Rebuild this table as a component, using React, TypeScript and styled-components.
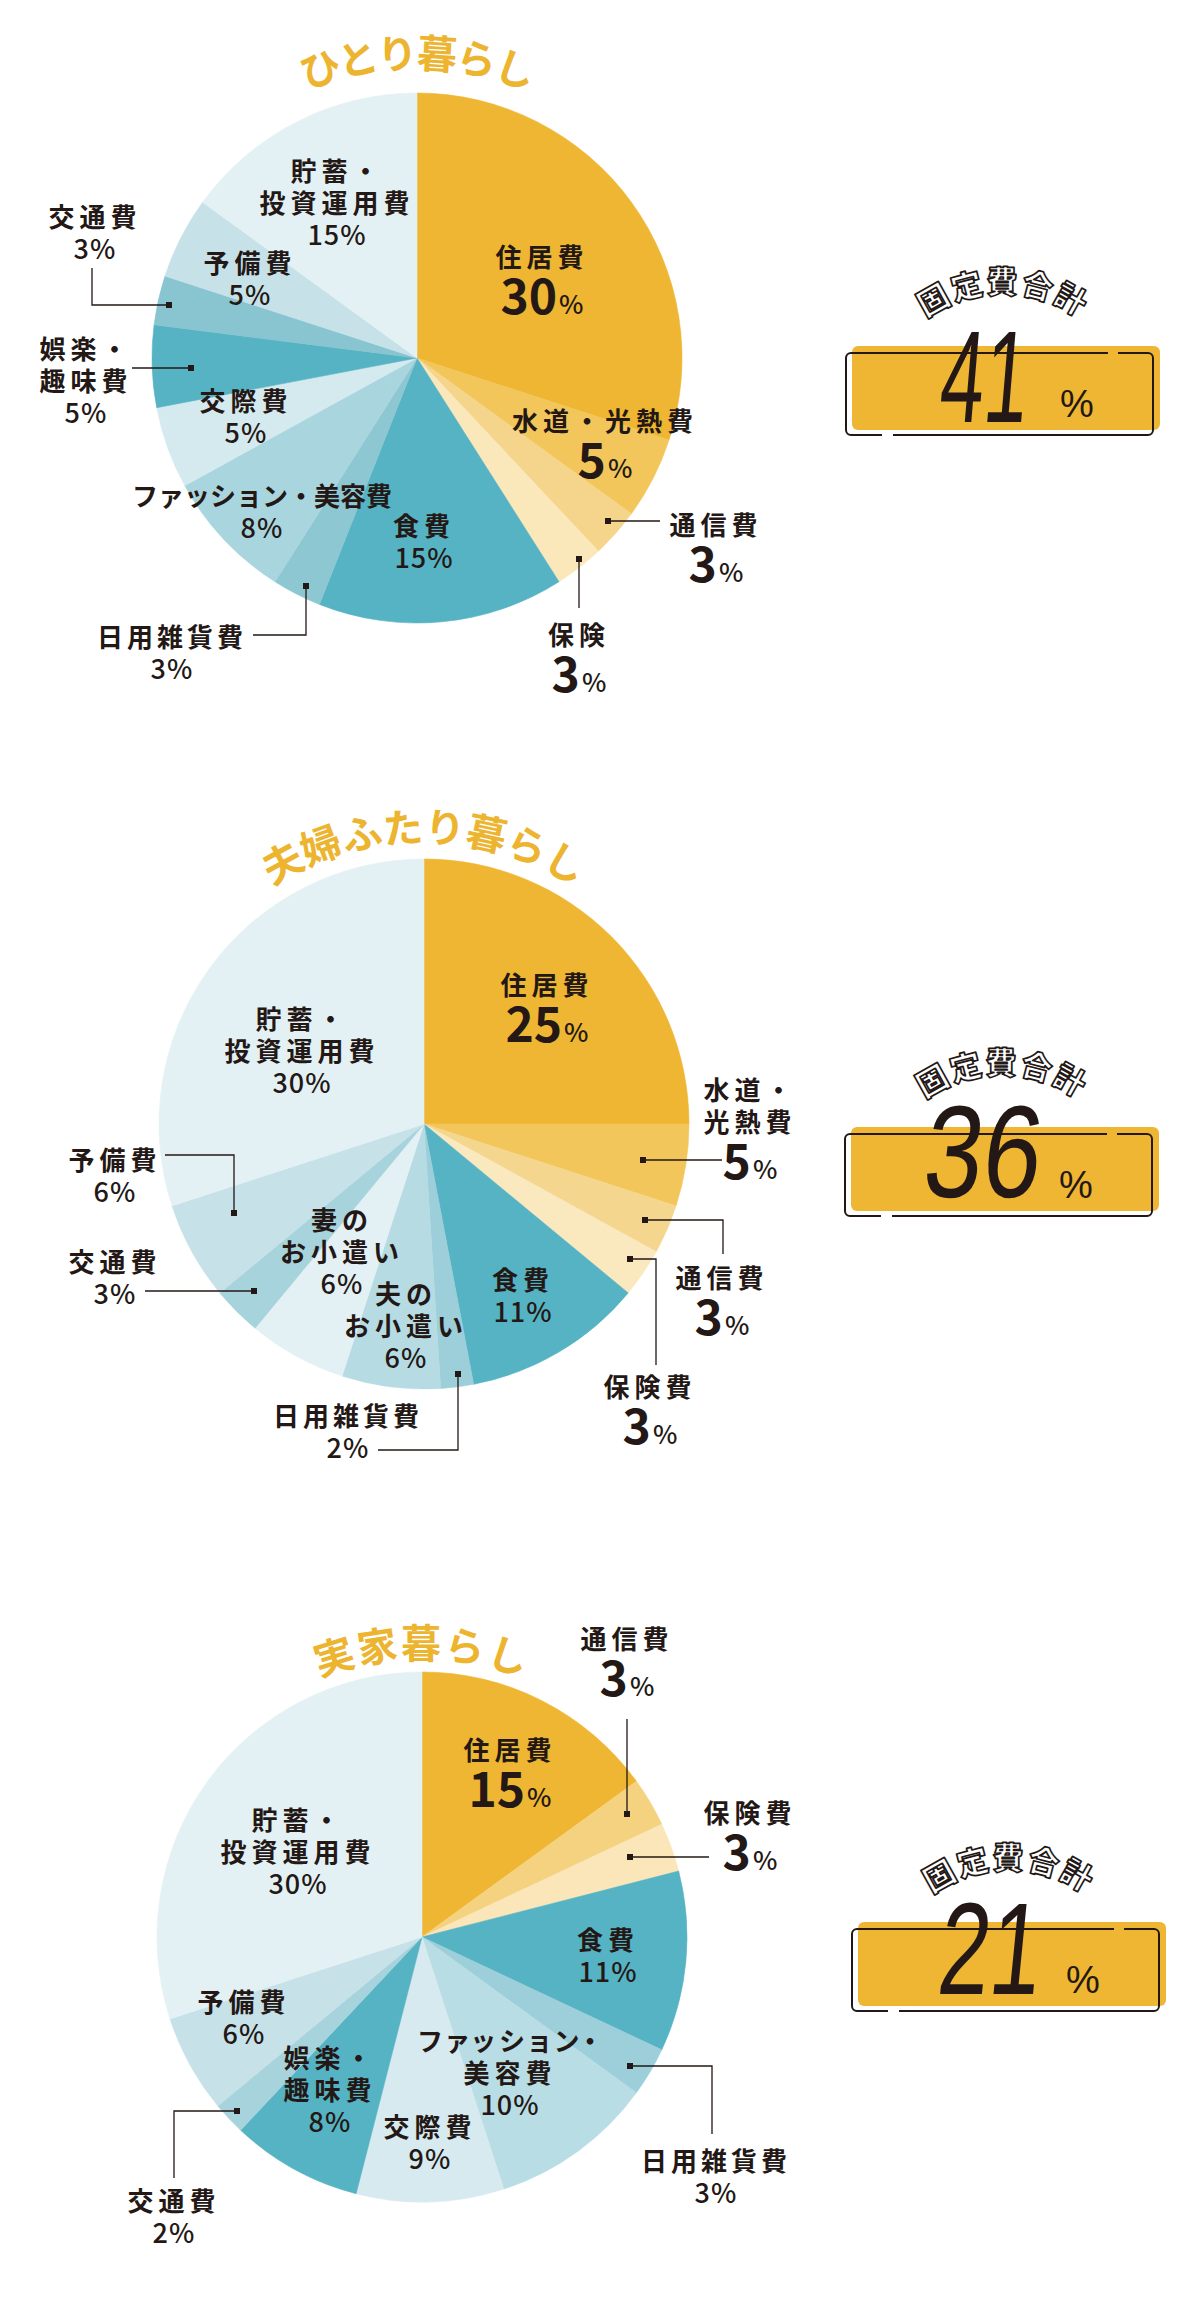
import React from 'react';
import styled, { createGlobalStyle } from 'styled-components';

const INK = '#231815';
const GOLD = '#EEB632';

const GlobalStyle = createGlobalStyle`
  html, body {
    margin: 0;
    padding: 0;
    background: #fff;
  }
  body {
    font-family: "Noto Sans CJK JP", "Noto Sans", sans-serif;
    color: ${INK};
  }
`;

type Slice = { value: number; color: string };
type Leader = { points: [number, number][]; dot: [number, number] };
type LabelSpec = {
  x: number;
  y: number;
  lines: string[];
  big?: string;
  pct?: string;
  spacing?: number;
  palt?: boolean;
};
type ChartSpec = {
  title: string;
  titleRadius: number;
  titleSpacing: number;
  height: number;
  cx: number;
  cy: number;
  slices: Slice[];
  labels: LabelSpec[];
  leaders: Leader[];
  box: { top: number; left: number; value: string; stretch: number; numTop: number };
};

const RADIUS = 265;

const charts: ChartSpec[] = [
  {
    title: 'ひとり暮らし',
    titleRadius: 290,
    titleSpacing: -2,
    height: 760,
    cx: 417,
    cy: 358,
    slices: [
      { value: 30, color: GOLD },
      { value: 5, color: '#F2C65B' },
      { value: 3, color: '#F5D58B' },
      { value: 3, color: '#FAE7BA' },
      { value: 15, color: '#55B3C4' },
      { value: 3, color: '#8CC7D2' },
      { value: 8, color: '#A9D5DE' },
      { value: 5, color: '#D5EAEF' },
      { value: 5, color: '#55B3C4' },
      { value: 3, color: '#88C5D0' },
      { value: 5, color: '#C6E2E8' },
      { value: 15, color: '#E4F1F4' },
    ],
    labels: [
      { x: 542, y: 240, lines: ['住居費'], big: '30' },
      { x: 605, y: 404, lines: ['水道・光熱費'], big: '5' },
      { x: 716, y: 508, lines: ['通信費'], big: '3' },
      { x: 579, y: 618, lines: ['保険'], big: '3' },
      { x: 424, y: 509, lines: ['食費'], pct: '15%' },
      { x: 172, y: 620, lines: ['日用雑貨費'], pct: '3%', spacing: 4 },
      { x: 262, y: 479, lines: ['ファッション・美容費'], pct: '8%', spacing: 0 },
      { x: 246, y: 384, lines: ['交際費'], pct: '5%' },
      { x: 86, y: 332, lines: ['娯楽・', '趣味費'], pct: '5%' },
      { x: 95, y: 200, lines: ['交通費'], pct: '3%' },
      { x: 250, y: 246, lines: ['予備費'], pct: '5%' },
      { x: 337, y: 154, lines: ['貯蓄・', '投資運用費'], pct: '15%' },
    ],
    leaders: [
      { points: [[92, 268], [92, 305], [169, 305]], dot: [169, 305] },
      { points: [[132, 368], [191, 368]], dot: [191, 368] },
      { points: [[253, 635], [306, 635], [306, 586]], dot: [306, 586] },
      { points: [[608, 521], [660, 521]], dot: [608, 521] },
      { points: [[579, 559], [579, 608]], dot: [579, 559] },
    ],
    box: { top: 265, left: 40, value: '41', stretch: 0.6, numTop: 46 },
  },
  {
    title: '夫婦ふたり暮らし',
    titleRadius: 282,
    titleSpacing: 0,
    height: 800,
    cx: 424,
    cy: 364,
    slices: [
      { value: 25, color: GOLD },
      { value: 5, color: '#F2C65B' },
      { value: 3, color: '#F5D68E' },
      { value: 3, color: '#FAE8BE' },
      { value: 11, color: '#55B3C4' },
      { value: 2, color: '#9CCFD9' },
      { value: 6, color: '#B6DBE3' },
      { value: 6, color: '#E4F1F4' },
      { value: 3, color: '#A6D3DC' },
      { value: 6, color: '#C6E2E8' },
      { value: 30, color: '#E4F1F4' },
    ],
    labels: [
      { x: 547, y: 208, lines: ['住居費'], big: '25' },
      { x: 302, y: 242, lines: ['貯蓄・', '投資運用費'], pct: '30%' },
      { x: 115, y: 383, lines: ['予備費'], pct: '6%' },
      { x: 115, y: 485, lines: ['交通費'], pct: '3%' },
      { x: 342, y: 443, lines: ['妻の', 'お小遣い'], pct: '6%' },
      { x: 406, y: 517, lines: ['夫の', 'お小遣い'], pct: '6%' },
      { x: 523, y: 503, lines: ['食費'], pct: '11%' },
      { x: 348, y: 639, lines: ['日用雑貨費'], pct: '2%', spacing: 4 },
      { x: 750, y: 313, lines: ['水道・', '光熱費'], big: '5' },
      { x: 722, y: 501, lines: ['通信費'], big: '3' },
      { x: 650, y: 610, lines: ['保険費'], big: '3' },
    ],
    leaders: [
      { points: [[165, 395], [234, 395], [234, 453]], dot: [234, 453] },
      { points: [[145, 531], [254, 531]], dot: [254, 531] },
      { points: [[378, 690], [458, 690], [458, 614]], dot: [458, 614] },
      { points: [[643, 400], [722, 400]], dot: [643, 400] },
      { points: [[645, 460], [723, 460], [723, 494]], dot: [645, 460] },
      { points: [[630, 499], [656, 499], [656, 605]], dot: [630, 499] },
    ],
    box: { top: 286, left: 39, value: '36', stretch: 0.8, numTop: 40 },
  },
  {
    title: '実家暮らし',
    titleRadius: 279,
    titleSpacing: 2,
    height: 743,
    cx: 422,
    cy: 377,
    slices: [
      { value: 15, color: GOLD },
      { value: 3, color: '#F4D27F' },
      { value: 3, color: '#FAE6B8' },
      { value: 11, color: '#55B3C4' },
      { value: 3, color: '#9CCFD9' },
      { value: 10, color: '#B9DDE4' },
      { value: 9, color: '#D6EAEF' },
      { value: 8, color: '#55B3C4' },
      { value: 2, color: '#A6D3DC' },
      { value: 6, color: '#C6E2E8' },
      { value: 30, color: '#E4F1F4' },
    ],
    labels: [
      { x: 627, y: 62, lines: ['通信費'], big: '3' },
      { x: 750, y: 236, lines: ['保険費'], big: '3' },
      { x: 510, y: 173, lines: ['住居費'], big: '15' },
      { x: 298, y: 243, lines: ['貯蓄・', '投資運用費'], pct: '30%' },
      { x: 608, y: 363, lines: ['食費'], pct: '11%' },
      { x: 244, y: 425, lines: ['予備費'], pct: '6%' },
      { x: 330, y: 481, lines: ['娯楽・', '趣味費'], pct: '8%' },
      { x: 510, y: 464, lines: ['ファッション・', '美容費'], pct: '10%', palt: true },
      { x: 430, y: 550, lines: ['交際費'], pct: '9%' },
      { x: 716, y: 584, lines: ['日用雑貨費'], pct: '3%', spacing: 4 },
      { x: 174, y: 624, lines: ['交通費'], pct: '2%' },
    ],
    leaders: [
      { points: [[627, 159], [627, 254]], dot: [627, 254] },
      { points: [[630, 297], [709, 297]], dot: [630, 297] },
      { points: [[630, 506], [712, 506], [712, 574]], dot: [630, 506] },
      { points: [[174, 618], [174, 551], [237, 551]], dot: [237, 551] },
    ],
    box: { top: 281, left: 46, value: '21', stretch: 0.7, numTop: 42 },
  },
];

const Page = styled.main`
  width: 1202px;
  display: flex;
  flex-direction: column;
`;

const Section = styled.section<{ $height: number }>`
  display: flex;
  align-items: flex-start;
  height: ${(p) => p.$height}px;
`;

const ChartCanvas = styled.div<{ $height: number }>`
  position: relative;
  flex: none;
  width: 800px;
  height: ${(p) => p.$height}px;
`;

const PieSvg = styled.svg`
  position: absolute;
  left: 0;
  top: 0;
`;

const TitleText = styled.text`
  font-family: "Noto Sans CJK JP", sans-serif;
  font-size: 40px;
  font-weight: 700;
  fill: #ECB42F;
`;

const Label = styled.div<{ $spacing: number; $palt?: boolean }>`
  position: absolute;
  transform: translateX(-50%);
  text-align: center;
  white-space: nowrap;
  font-size: 26px;
  line-height: 32px;
  font-weight: 700;
  color: ${INK};
  letter-spacing: ${(p) => p.$spacing}px;
  font-feature-settings: ${(p) => (p.$palt ? '"palt"' : 'normal')};
`;

const LabelLine = styled.div``;

const PctLine = styled.div`
  font-size: 27px;
  letter-spacing: 1px;
  font-weight: 500;
`;

const BigLine = styled.div`
  font-size: 48px;
  line-height: 42px;
  letter-spacing: 0;
  font-weight: 700;

  small {
    font-size: 26px;
    font-weight: 500;
    margin-left: 2px;
  }
`;

const FixedBox = styled.div<{ $top: number; $left: number }>`
  position: relative;
  flex: none;
  width: 330px;
  height: 175px;
  margin-top: ${(p) => p.$top}px;
  margin-left: ${(p) => p.$left}px;
`;

const BoxFill = styled.div`
  position: absolute;
  left: 12px;
  top: 81px;
  width: 308px;
  height: 84px;
  border-radius: 6px;
  background: ${GOLD};
`;

const BoxArt = styled.svg`
  position: absolute;
  left: 0;
  top: 0;
  overflow: visible;
`;

const BoxTitle = styled.text`
  font-family: "Noto Sans CJK JP", sans-serif;
  font-size: 31px;
  font-weight: 900;
  letter-spacing: 2px;
  fill: #fff;
  stroke: ${INK};
  stroke-width: 1.7px;
  stroke-linejoin: round;
`;

const TotalNumber = styled.div<{ $stretch: number; $top: number }>`
  position: absolute;
  left: 145px;
  top: ${(p) => p.$top}px;
  font-family: "Liberation Sans", Arial, sans-serif;
  font-size: 131px;
  line-height: 131px;
  font-weight: 400;
  color: ${INK};
  white-space: nowrap;
  transform: translateX(-50%) scaleX(${(p) => p.$stretch}) skewX(-8deg);
`;

const PercentMark = styled.div`
  position: absolute;
  left: 220px;
  top: 120px;
  font-family: "Liberation Sans", Arial, sans-serif;
  font-size: 38px;
  line-height: 38px;
  color: ${INK};
`;

const polar = (cx: number, cy: number, r: number, deg: number): [number, number] => {
  const a = (deg * Math.PI) / 180;
  return [cx + r * Math.sin(a), cy - r * Math.cos(a)];
};

const slicePath = (cx: number, cy: number, r: number, from: number, to: number) => {
  const [x0, y0] = polar(cx, cy, r, from);
  const [x1, y1] = polar(cx, cy, r, to);
  const large = to - from > 180 ? 1 : 0;
  return `M ${cx} ${cy} L ${x0} ${y0} A ${r} ${r} 0 ${large} 1 ${x1} ${y1} Z`;
};

const arcPath = (cx: number, cy: number, r: number, span: number) => {
  const [x0, y0] = polar(cx, cy, r, -span);
  const [x1, y1] = polar(cx, cy, r, span);
  return `M ${x0} ${y0} A ${r} ${r} 0 0 1 ${x1} ${y1}`;
};

const Pie: React.FC<{ chart: ChartSpec; id: string }> = ({ chart, id }) => {
  let start = 0;
  return (
    <PieSvg width={800} height={chart.height} viewBox={`0 0 800 ${chart.height}`}>
      <defs>
        <path id={id} d={arcPath(chart.cx, chart.cy, chart.titleRadius, 80)} />
      </defs>
      {chart.slices.map((s, i) => {
        const from = start;
        const to = start + (s.value / 100) * 360;
        start = to;
        return (
          <path
            key={i}
            d={slicePath(chart.cx, chart.cy, RADIUS, from, to)}
            fill={s.color}
            stroke={s.color}
            strokeWidth={0.6}
          />
        );
      })}
      <TitleText style={{ letterSpacing: `${chart.titleSpacing}px` }}>
        <textPath href={`#${id}`} startOffset="50%" textAnchor="middle">
          {chart.title}
        </textPath>
      </TitleText>
      {chart.leaders.map((l, i) => (
        <g key={i}>
          <polyline
            points={l.points.map((p) => p.join(',')).join(' ')}
            fill="none"
            stroke={INK}
            strokeWidth={1.3}
          />
          <rect x={l.dot[0] - 3} y={l.dot[1] - 3} width={6} height={6} fill={INK} />
        </g>
      ))}
    </PieSvg>
  );
};

const Total: React.FC<{ box: ChartSpec['box']; id: string }> = ({ box, id }) => (
  <FixedBox $top={box.top} $left={box.left}>
    <BoxFill />
    <BoxArt width={330} height={175} viewBox="0 0 330 175">
      <defs>
        <path id={id} d={arcPath(163, 158, 130, 70)} />
      </defs>
      <BoxTitle>
        <textPath href={`#${id}`} startOffset="50%" textAnchor="middle">
          固定費合計
        </textPath>
      </BoxTitle>
      <g fill="none" stroke={INK} strokeWidth={2}>
        <path d="M 278 88 H 308 A 5 5 0 0 1 313 93 V 165 A 5 5 0 0 1 308 170 H 53" />
        <path d="M 42 170 H 11 A 5 5 0 0 1 6 165 V 93 A 5 5 0 0 1 11 88 H 268" />
      </g>
    </BoxArt>
    <TotalNumber $stretch={box.stretch} $top={box.numTop}>
      {box.value}
    </TotalNumber>
    <PercentMark>%</PercentMark>
  </FixedBox>
);

export default function App() {
  return (
    <>
      <GlobalStyle />
      <Page>
        {charts.map((chart, ci) => (
          <Section key={ci} $height={chart.height}>
            <ChartCanvas $height={chart.height}>
              <Pie chart={chart} id={`pie-title-${ci}`} />
              {chart.labels.map((l, li) => (
                <Label
                  key={li}
                  $spacing={l.spacing ?? 5}
                  $palt={l.palt}
                  style={{ left: l.x, top: l.y }}
                >
                  {l.lines.map((line, k) => (
                    <LabelLine key={k}>{line}</LabelLine>
                  ))}
                  {l.pct && <PctLine>{l.pct}</PctLine>}
                  {l.big && (
                    <BigLine>
                      {l.big}
                      <small>%</small>
                    </BigLine>
                  )}
                </Label>
              ))}
            </ChartCanvas>
            <Total box={chart.box} id={`total-title-${ci}`} />
          </Section>
        ))}
      </Page>
    </>
  );
}
